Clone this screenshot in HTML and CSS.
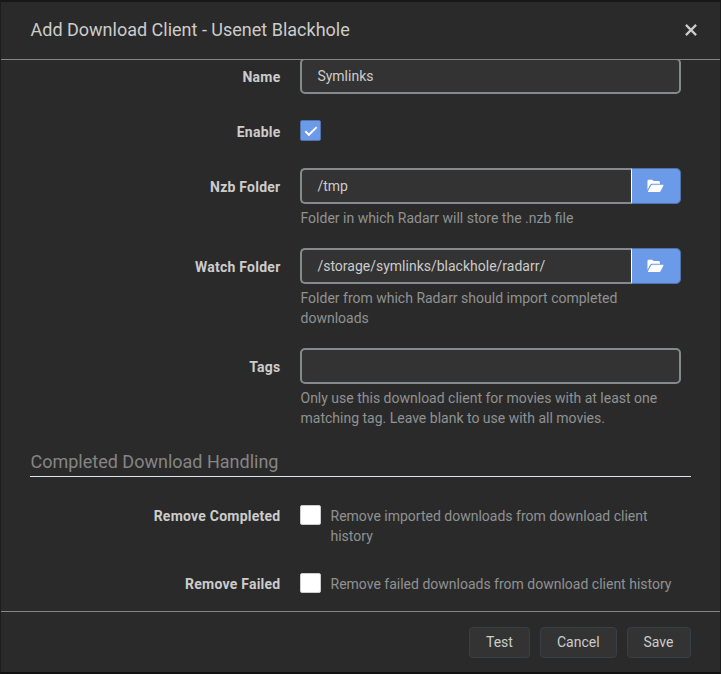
FILE: index.html
```html
<!DOCTYPE html>
<html lang="en">
<head>
<meta charset="utf-8">
<title>Add Download Client - Usenet Blackhole</title>
<link rel="stylesheet" href="styles.css">
</head>
<body>
<div class="modal">
  <header class="modal-header">
    <h1 class="title">Add Download Client - Usenet Blackhole</h1>
    <button class="close" aria-label="Close"><svg width="12" height="12" viewBox="0 0 12 12"><path d="M.9.9 11.1 11.1M11.1.9.9 11.1"/></svg></button>
  </header>
  <main class="modal-body">
    <div class="group">
      <span class="label">Name</span>
      <div class="control"><div class="input">Symlinks</div></div>
    </div>
    <div class="group">
      <span class="label">Enable</span>
      <div class="control check-row enable-row"><span class="check checked"><svg width="14" height="12" viewBox="0 0 14 12"><path d="M1.3 6.3 4.9 9.8 12.7 2.1"/></svg></span></div>
    </div>
    <div class="group">
      <span class="label">Nzb Folder</span>
      <div class="control">
        <div class="input-group">
          <div class="input joined">/tmp</div>
          <button class="browse" aria-label="Browse"><svg width="17" height="14" viewBox="0 0 17 14"><path d="M.5 11V2Q.5.7 1.8.7H5Q6.2.7 6.2 2H11.5Q13 2 13 3.5V4.7H5Q3.8 4.7 3 5.8Z"/><path d="M.9 12.6 4 6.6Q4.4 5.7 5.5 5.7H15.8Q16.9 5.7 16.4 6.7L13.8 11.7Q13.3 12.9 12 12.9H1.3Q.8 12.9.9 12.6Z"/></svg></button>
        </div>
        <p class="help">Folder in which Radarr will store the .nzb file</p>
      </div>
    </div>
    <div class="group">
      <span class="label">Watch Folder</span>
      <div class="control">
        <div class="input-group">
          <div class="input joined">/storage/symlinks/blackhole/radarr/</div>
          <button class="browse" aria-label="Browse"><svg width="17" height="14" viewBox="0 0 17 14"><path d="M.5 11V2Q.5.7 1.8.7H5Q6.2.7 6.2 2H11.5Q13 2 13 3.5V4.7H5Q3.8 4.7 3 5.8Z"/><path d="M.9 12.6 4 6.6Q4.4 5.7 5.5 5.7H15.8Q16.9 5.7 16.4 6.7L13.8 11.7Q13.3 12.9 12 12.9H1.3Q.8 12.9.9 12.6Z"/></svg></button>
        </div>
        <p class="help">Folder from which Radarr should import completed downloads</p>
      </div>
    </div>
    <div class="group">
      <span class="label">Tags</span>
      <div class="control">
        <div class="input"></div>
        <p class="help">Only use this download client for movies with at least one matching tag. Leave blank to use with all movies.</p>
      </div>
    </div>
    <section class="fieldset">
      <h2 class="legend">Completed Download Handling</h2>
      <div class="group">
        <span class="label">Remove Completed</span>
        <div class="control check-row"><span class="check"></span><p class="check-help">Remove imported downloads from download client history</p></div>
      </div>
      <div class="group">
        <span class="label">Remove Failed</span>
        <div class="control check-row"><span class="check"></span><p class="check-help">Remove failed downloads from download client history</p></div>
      </div>
    </section>
  </main>
  <footer class="modal-footer">
    <button class="button">Test</button>
    <button class="button">Cancel</button>
    <button class="button">Save</button>
  </footer>
</div>
</body>
</html>
```
FILE: styles.css
```css
* { box-sizing: border-box; }

body {
  margin: 0;
  background: #151515;
  color: #ccc;
  font: 14px/20px Roboto, sans-serif;
}

h1, h2, p { margin: 0; font-weight: 400; }
button { font: inherit; color: inherit; padding: 0; }

.modal {
  display: flex;
  flex-direction: column;
  height: 674px;
  border: 1px solid #1c1c1c;
  border-top: 2px solid #171717;
  border-bottom: 2px solid #111;
  background: #2a2a2a;
}

.modal-header {
  display: flex;
  align-items: center;
  justify-content: space-between;
  flex: 0 0 58px;
  padding: 0 23px 1px 29.5px;
  border-bottom: 1px solid #858585;
}

.title { font-size: 18px; line-height: 26px; }

.close {
  display: flex;
  margin-top: -1px;
  border: 0;
  background: none;
}

.close svg {
  fill: none;
  stroke: #ccc;
  stroke-width: 2.2;
}

.modal-body {
  flex: 1 1 0;
  min-height: 0;
  padding: 0 29px;
  overflow: hidden;
}

.group {
  display: flex;
  margin-bottom: 19px;
}

.modal-body > .group:first-child { margin-top: -2px; }

.label {
  flex: 0 0 250.5px;
  margin-right: 19.5px;
  padding-top: 2px;
  height: 36px;
  line-height: 35px;
  font-weight: 700;
  letter-spacing: 0.24px;
  text-align: right;
}

.control { flex: 0 0 381px; }

.input {
  height: 36px;
  padding: 0 15.4px;
  border: 2px solid #858a8c;
  border-radius: 5px;
  background: #333;
  line-height: 32px;
}

.input-group { display: flex; }

.input.joined {
  flex: 1;
  border-right: 1px solid #fff;
  border-radius: 5px 0 0 5px;
}

.browse {
  display: flex;
  align-items: center;
  justify-content: center;
  width: 49px;
  border: 1px solid #5272aa;
  border-left: 0;
  border-radius: 0 5px 5px 0;
  background: #6b9ae8;
}

.browse svg { margin-right: 1px; fill: #fff; }

.help {
  padding: 4px 0 1px 0.5px;
  color: #909293;
}

.check-row {
  display: flex;
  min-height: 36px;
  padding-top: 8px;
}

.enable-row { padding-top: 7px; }

.check {
  display: flex;
  align-items: center;
  justify-content: center;
  flex: 0 0 21px;
  height: 20px;
  border: 1px solid #ccc;
  border-radius: 2px;
  background: #fff;
}

.check.checked {
  height: 21px;
  border-color: #5272aa;
  background: #6b9ae8;
}

.check svg {
  fill: none;
  stroke: #fff;
  stroke-width: 1.9;
}

.check-help {
  margin-left: 9.5px;
  padding-top: 1px;
  color: #909293;
}

.legend {
  margin-bottom: 20px;
  padding-left: 0.5px;
  border-bottom: 1px solid #dde6e9;
  color: #858585;
  font-size: 18px;
  line-height: 28px;
}

.modal-footer {
  display: flex;
  align-items: center;
  justify-content: flex-end;
  gap: 10px;
  flex: 0 0 61px;
  padding: 0 29.5px 0 0;
  border-top: 1px solid #858585;
}

.button {
  height: 31px;
  padding: 0 16px;
  border: 1px solid #393f45;
  border-radius: 4px;
  background: #333;
}
```
